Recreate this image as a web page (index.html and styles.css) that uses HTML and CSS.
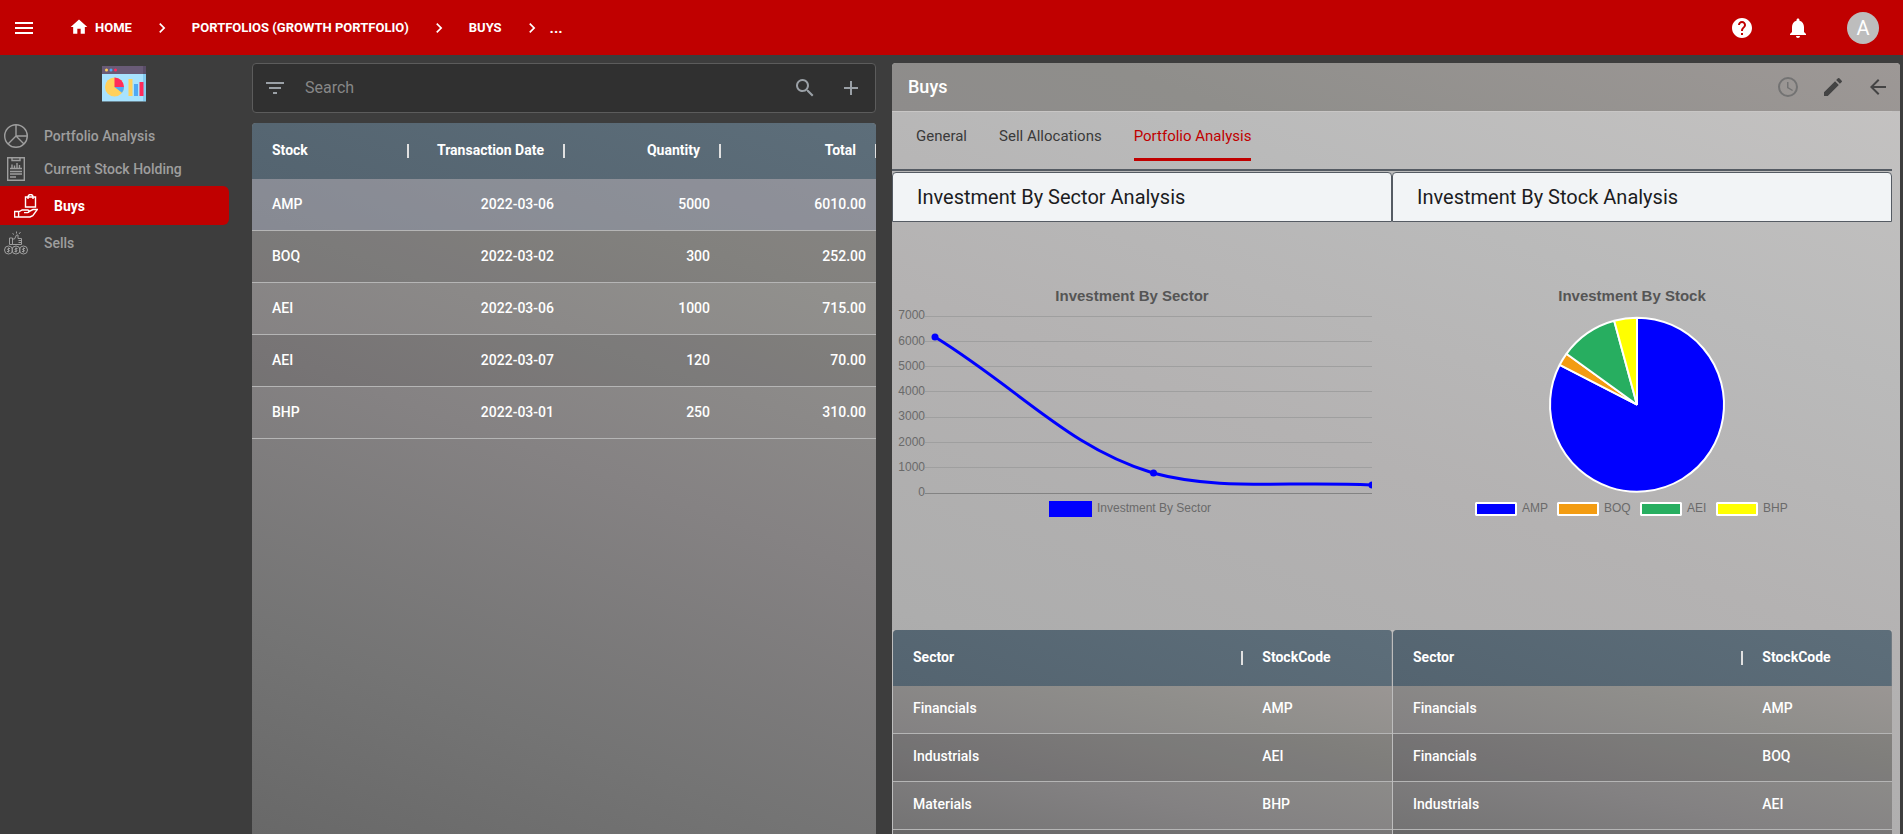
FILE: index.html
```html
<!DOCTYPE html>
<html lang="en">
<head>
<meta charset="utf-8">
<title>Buys - Portfolio Analysis</title>
<link rel="stylesheet" href="styles.css">
</head>
<body>
<header class="topbar">
  <button class="icon-btn" aria-label="Menu"><svg width="24" height="24" viewBox="0 0 24 24"><path d="M3 18h18v-2H3v2zm0-5h18v-2H3v2zm0-7v2h18V6H3z"/></svg></button>
  <nav class="crumbs" aria-label="Breadcrumb">
    <a href="#" class="crumb home"><svg width="20" height="20" viewBox="0 0 24 24"><path d="M10 20v-6h4v6h5v-8h3L12 3 2 12h3v8z"/></svg>HOME</a>
    <svg class="chev" width="20" height="20" viewBox="0 0 24 24"><path d="M10 6 8.600 7.400 13.200 12l-4.600 4.600L10 18l6-6z"/></svg>
    <a href="#" class="crumb">PORTFOLIOS (GROWTH PORTFOLIO)</a>
    <svg class="chev" width="20" height="20" viewBox="0 0 24 24"><path d="M10 6 8.600 7.400 13.200 12l-4.600 4.600L10 18l6-6z"/></svg>
    <a href="#" class="crumb">BUYS</a>
    <svg class="chev" width="20" height="20" viewBox="0 0 24 24"><path d="M10 6 8.600 7.400 13.200 12l-4.600 4.600L10 18l6-6z"/></svg>
    <a href="#" class="crumb more">...</a>
  </nav>
  <div class="top-actions">
    <button class="icon-btn" aria-label="Help"><svg width="24" height="24" viewBox="0 0 24 24"><path d="M12 2C6.480 2 2 6.480 2 12s4.480 10 10 10 10-4.480 10-10S17.520 2 12 2zm1 17h-2v-2h2v2zm2.070-7.750-.9.920C13.450 12.900 13 13.500 13 15h-2v-.5c0-1.100.45-2.100 1.170-2.830l1.240-1.260c.37-.36.59-.86.59-1.410 0-1.100-.9-2-2-2s-2 .9-2 2H8c0-2.210 1.790-4 4-4s4 1.790 4 4c0 .88-.36 1.680-.93 2.250z"/></svg></button>
    <button class="icon-btn" aria-label="Notifications"><svg width="24" height="24" viewBox="0 0 24 24"><path d="M12 22c1.100 0 2-.9 2-2h-4c0 1.100.9 2 2 2zm6-6v-5c0-3.070-1.630-5.640-4.500-6.320V4c0-.83-.67-1.500-1.500-1.500s-1.500.67-1.500 1.500v.68C7.640 5.360 6 7.920 6 11v5l-2 2v1h16v-1l-2-2z"/></svg></button>
    <button class="avatar" aria-label="Account">A</button>
  </div>
</header>

<div class="workspace">
  <aside class="sidebar">
    <svg class="logo" width="44" height="36" viewBox="0 0 44 36">
      <rect width="44" height="36" fill="#a8e3ff"/><rect x="41" width="3" height="36" fill="#84cdf2"/>
      <rect width="44" height="8" fill="#695b77"/><rect x="41" width="3" height="8" fill="#5a4d68"/>
      <rect y="35" width="44" height="1" fill="#6d8794"/>
      <circle cx="4.500" cy="4" r="1.500" fill="#ffd15c"/><circle cx="9" cy="4" r="1.500" fill="#4fa9f5"/><circle cx="13.500" cy="4" r="1.500" fill="#ff2b5b"/>
      <circle cx="12.500" cy="21" r="9.500" fill="#ffd15c"/>
      <path d="M12.500 21V11.500a9.500 9.500 0 0 1 9.500 9.500z" fill="#ff2b5b"/><path d="M12.500 21H22a9.500 9.500 0 0 1-2 5.800z" fill="#4fa9f5"/>
      <rect x="26.500" y="13" width="4" height="17" fill="#ffd15c"/><rect x="32" y="18" width="4" height="12" fill="#4fa9f5"/><rect x="37.500" y="16" width="4" height="14" fill="#ff2b5b"/>
    </svg>
    <nav class="side-nav" aria-label="Sections">
      <a href="#" class="side-link"><svg width="24" height="24" viewBox="0 0 24 24"><circle cx="12" cy="12" r="11.300"/><path d="M12 1v11h11M12 12l-8 8M12 12l8 8"/></svg>Portfolio Analysis</a>
      <a href="#" class="side-link"><svg width="24" height="24" viewBox="0 0 24 24"><path d="M3.700.7h16.600v22.600H3.700zM8 1v2.500h8V1M6 11.500h12M6 14.500h12M6 17h12M6 20h6M8 11V7.500M10.500 11V8.500M13 11V6M15.500 11V8"/></svg>Current Stock Holding</a>
      <a href="#" class="side-link active" aria-current="page"><svg width="24" height="24" viewBox="0 0 24 24"><path d="M11.500 3h10v10h-10zM14 5V3a2.500 2.500 0 0 1 5 0v2M.6 17.500h4v5.500h-4zM4.600 18l3.500-2h5.500c2 0 2 2.600 0 2.600H10M14 18l5-2.500h4.400l-4.600 6.200-2.800 1.300H4.600"/></svg>Buys</a>
      <a href="#" class="side-link"><svg class="fine" width="24" height="24" viewBox="0 0 24 24"><circle cx="4.500" cy="19" r="4"/><circle cx="12" cy="19" r="4"/><circle cx="19.500" cy="19" r="4"/><path d="M6 17.500H4q-1 .8 0 1.500h1q1 .8 0 1.500H3M4.500 16.500v5M13.500 17.500h-2q-1 .8 0 1.500h1q1 .8 0 1.500h-2M12 16.500v5M21 17.500h-2q-1 .8 0 1.500h1q1 .8 0 1.500h-2M19.500 16.500v5M5.500 7h3v6.500h-3zM8.500 8h2l2-4h1.500v3.500h3.500v6h-9M14.500 9.500h3M14.500 11.500h3M8.500 2.500l1.500 1M12.500.5v2M16.500 1 15 3"/></svg>Sells</a>
    </nav>
  </aside>

  <main class="list-pane">
    <form class="search">
      <button type="button" class="icon-btn" aria-label="Filter"><svg width="24" height="24" viewBox="0 0 24 24"><path d="M10 18h4v-2h-4v2zM3 6v2h18V6H3zm3 7h12v-2H6v2z"/></svg></button>
      <input class="search-input" type="text" placeholder="Search" aria-label="Search">
      <button type="button" class="icon-btn" aria-label="Search"><svg width="24" height="24" viewBox="0 0 24 24"><path d="M15.500 14h-.79l-.28-.27A6.500 6.500 0 1 0 13.730 14.430l.27.28v.79l5 4.990L20.490 19l-4.990-5zm-6 0a4.500 4.500 0 1 1 0-9 4.500 4.500 0 0 1 0 9z"/></svg></button>
      <button type="button" class="icon-btn" aria-label="Add"><svg width="24" height="24" viewBox="0 0 24 24"><path d="M19 13h-6v6h-2v-6H5v-2h6V5h2v6h6z"/></svg></button>
    </form>
    <div class="table-box">
      <table class="grid trades">
        <thead><tr><th>Stock</th><th class="num">Transaction Date</th><th class="num">Quantity</th><th class="num">Total</th></tr></thead>
        <tbody>
          <tr class="selected"><td>AMP</td><td class="num">2022-03-06</td><td class="num">5000</td><td class="num">6010.00</td></tr>
          <tr><td>BOQ</td><td class="num">2022-03-02</td><td class="num">300</td><td class="num">252.00</td></tr>
          <tr><td>AEI</td><td class="num">2022-03-06</td><td class="num">1000</td><td class="num">715.00</td></tr>
          <tr><td>AEI</td><td class="num">2022-03-07</td><td class="num">120</td><td class="num">70.00</td></tr>
          <tr><td>BHP</td><td class="num">2022-03-01</td><td class="num">250</td><td class="num">310.00</td></tr>
        </tbody>
      </table>
    </div>
  </main>

  <section class="detail">
    <div class="detail-head">
      <h1 class="detail-title">Buys</h1>
      <button class="icon-btn faded" aria-label="History"><svg width="24" height="24" viewBox="0 0 24 24"><path d="M12 2a10 10 0 1 0 0 20 10 10 0 0 0 0-20zm0 18a8 8 0 1 1 0-16 8 8 0 0 1 0 16zM12.500 7H11v6l5.200 3.100.8-1.200-4.500-2.700z"/></svg></button>
      <button class="icon-btn" aria-label="Edit"><svg width="24" height="24" viewBox="0 0 24 24"><path d="M3 17.250V21h3.750L17.810 9.940l-3.750-3.750L3 17.250zM20.710 7.040a1 1 0 0 0 0-1.410l-2.340-2.340a1 1 0 0 0-1.410 0l-1.830 1.830 3.750 3.750 1.830-1.830z"/></svg></button>
      <button class="icon-btn" aria-label="Back"><svg width="24" height="24" viewBox="0 0 24 24"><path d="M20 11H7.830l5.590-5.590L12 4l-8 8 8 8 1.410-1.410L7.830 13H20v-2z"/></svg></button>
    </div>
    <div class="detail-body">
      <div class="tabs" role="tablist">
        <button class="tab" role="tab">General</button>
        <button class="tab" role="tab">Sell Allocations</button>
        <button class="tab current" role="tab" aria-selected="true">Portfolio Analysis</button>
      </div>
      <div class="columns">
        <h2 class="card-title">Investment By Sector Analysis</h2>
        <h2 class="card-title">Investment By Stock Analysis</h2>

        <figure class="chart">
          <svg viewBox="0 0 500 250" role="img" aria-label="Investment By Sector">
            <text class="chart-title" x="240" y="21">Investment By Sector</text>
            <path class="gridline" d="M33 36.500H480M33 61.500H480M33 86.500H480M33 111.500H480M33 137.500H480M33 162.500H480M33 187.500H480"/>
            <path class="axis" d="M33 213.500H480"/>
            <g class="ticks"><text x="33" y="39">7000</text><text x="33" y="65">6000</text><text x="33" y="90">5000</text><text x="33" y="115">4000</text><text x="33" y="140">3000</text><text x="33" y="166">2000</text><text x="33" y="191">1000</text><text x="33" y="216">0</text></g>
            <clipPath id="plot"><rect x="33" y="36" width="447" height="178"/></clipPath>
            <g clip-path="url(#plot)"><path class="series" d="M43 57C130 111 176 167 261 193C328 211 392 201 480 205"/><g fill="#00f"><circle cx="43" cy="57" r="3.500"/><circle cx="261.500" cy="193" r="3.500"/><circle cx="480" cy="205" r="3.500"/></g></g>
            <rect x="157" y="221" width="43" height="16" fill="#00f"/>
            <text class="legend" x="205" y="232">Investment By Sector</text>
          </svg>
        </figure>
        <figure class="chart">
          <svg viewBox="0 0 500 250" role="img" aria-label="Investment By Stock">
            <text class="chart-title" x="240" y="21">Investment By Stock</text>
            <g stroke="#fff" stroke-width="2" stroke-linejoin="bevel">
              <path fill="#00f" d="M245 124.700V37.700A87 87 0 1 1 167.700 84.800z"/>
              <path fill="#f39c12" d="M245 124.700 167.700 84.800A87 87 0 0 1 174.400 73.800z"/>
              <path fill="#27ae60" d="M245 124.700 174.400 73.800A87 87 0 0 1 222.200 40.700z"/>
              <path fill="#ff0" d="M245 124.700 222.200 40.700A87 87 0 0 1 245 37.700z"/>
              <rect x="84" y="223" width="40" height="12" fill="#00f"/><rect x="166" y="223" width="40" height="12" fill="#f39c12"/><rect x="249" y="223" width="40" height="12" fill="#27ae60"/><rect x="325" y="223" width="40" height="12" fill="#ff0"/>
            </g>
            <text class="legend" x="130" y="232">AMP</text><text class="legend" x="212" y="232">BOQ</text><text class="legend" x="295" y="232">AEI</text><text class="legend" x="371" y="232">BHP</text>
          </svg>
        </figure>

        <div class="mini-box"><table class="grid mini">
          <thead><tr><th class="wide">Sector</th><th>StockCode</th></tr></thead>
          <tbody><tr><td>Financials</td><td>AMP</td></tr><tr><td>Industrials</td><td>AEI</td></tr><tr><td>Materials</td><td>BHP</td></tr><tr><td></td><td></td></tr></tbody>
        </table></div>
        <div class="mini-box"><table class="grid mini">
          <thead><tr><th class="wide">Sector</th><th>StockCode</th></tr></thead>
          <tbody><tr><td>Financials</td><td>AMP</td></tr><tr><td>Financials</td><td>BOQ</td></tr><tr><td>Industrials</td><td>AEI</td></tr><tr><td></td><td></td></tr></tbody>
        </table></div>
      </div>
    </div>
  </section>
</div>
</body>
</html>
```

FILE: styles.css
```css
* { box-sizing: border-box; }

body {
  margin: 0;
  height: 100vh;
  display: flex;
  flex-direction: column;
  overflow: hidden;
  background: #3d3d3d;
  color: #fff;
  font: 500 14px/20px Roboto, sans-serif;
}

button { font: inherit; color: inherit; background: none; border: 0; padding: 0; cursor: pointer; }
a { color: inherit; text-decoration: none; }
svg { display: block; flex: none; }
.icon-btn { display: flex; flex: none; }
.icon-btn svg, .crumbs svg { fill: currentColor; }

/* Top bar */
.topbar {
  flex: none;
  height: 55px;
  display: flex;
  align-items: center;
  padding: 0 24px 0 12px;
  background: #c00000;
}
.crumbs { display: flex; align-items: center; margin-left: 33px; font-size: 13px; font-weight: 700; }
.crumb { display: flex; align-items: center; margin-right: 20px; }
.home { gap: 6px; }
.home svg { margin-top: -2px; }
.chev { margin-right: 20px; }
.more { margin-left: -12px; font-size: 15px; }
.top-actions { display: flex; align-items: center; margin-left: auto; }
.top-actions .icon-btn { margin-right: 32px; }
.avatar {
  width: 32px;
  height: 32px;
  margin-left: 5px;
  border-radius: 50%;
  background: #bdbdbd;
  font-size: 20px;
  font-weight: 400;
}

.workspace {
  flex: 1;
  min-height: 0;
  display: grid;
  grid-template-columns: 236px minmax(0, 624fr) minmax(0, 1008fr);
  column-gap: 16px;
  padding-right: 3px;
}

/* Sidebar */
.sidebar { padding-top: 11px; }
.logo { margin: 0 auto; position: relative; left: 6px; }
.side-nav { margin-top: 17px; }
.side-link {
  display: flex;
  align-items: center;
  gap: 16px;
  height: 33px;
  padding-left: 4px;
  color: #9e9e9e;
}
.side-link svg { fill: none; stroke: currentColor; stroke-width: 1.400; }
.side-link svg.fine { stroke-width: 1; }
.side-link.active {
  height: 39px;
  margin: 1px 7px 1px 0;
  padding-left: 14px;
  border-radius: 0 6px 6px 0;
  background: #c00000;
  color: #fff;
  font-weight: 700;
}

/* Trade list */
.list-pane { display: flex; flex-direction: column; gap: 10px; padding-top: 8px; min-height: 0; }
.search {
  flex: none;
  height: 50px;
  display: flex;
  align-items: center;
  padding: 0 12px 0 10px;
  border: 1px solid #5c5c5c;
  border-radius: 4px;
  background: #303030;
  color: #9aa0a6;
}
.search-input {
  flex: 1;
  min-width: 0;
  margin-left: 18px;
  padding: 0;
  border: 0;
  outline: 0;
  background: none;
  color: #fff;
  font: 400 16px/24px Roboto, sans-serif;
}
.search-input::placeholder { color: #878787; opacity: 1; }
.search .icon-btn + .icon-btn { margin-left: 22px; }

.table-box {
  flex: 1;
  overflow: hidden;
  border-radius: 4px 4px 0 0;
  background: linear-gradient(200deg, #9b9694 0%, #91908d 20%, #858283 48%, #747474 78%, #686868 100%);
}

.grid { width: 100%; table-layout: fixed; border-collapse: separate; border-spacing: 0; }
.grid thead tr { background: linear-gradient(200deg, #5d6e7a, #546470); }
.grid th { position: relative; height: 56px; padding: 0 20px 2px; font-weight: 700; text-align: left; white-space: nowrap; }
.grid th:not(:last-child)::after, .trades th::after {
  content: "";
  position: absolute;
  top: 21px;
  right: -1px;
  z-index: 1;
  width: 2px;
  height: 14px;
  background: #e0e0e0;
}
.grid td { height: 52px; padding: 0 20px 2px; border-bottom: 1px solid #b5b5b5; }
.grid tbody tr:nth-child(even) { background: rgba(0, 0, 0, 0.1); }
.grid .num { text-align: right; }
.grid td.num { padding-right: 10px; }
.grid .selected { background: rgba(130, 140, 165, 0.4); }

/* Detail panel */
.detail {
  display: flex;
  flex-direction: column;
  min-height: 0;
  margin-top: 8px;
  overflow: hidden;
  border-radius: 4px 4px 0 0;
  background: linear-gradient(200deg, #c5c3c2 0%, #bababa 28%, #b4b2b2 52%, #adadad 80%, #a6a6a6 100%);
}
.detail-head {
  flex: none;
  height: 48px;
  display: flex;
  align-items: center;
  gap: 21px;
  padding: 0 10px 0 16px;
  background: linear-gradient(200deg, #9d9896, #8f8e8b 70%, #8e8c8b);
  color: #444;
}
.detail-title { flex: 1; margin: 0; color: #fff; font-size: 18px; font-weight: 500; }
.faded { color: #737373; }
.detail-body { flex: 1; min-height: 0; overflow: hidden; padding-right: 8px; }
.tabs {
  display: flex;
  gap: 32px;
  height: 60px;
  padding-left: 24px;
  border-top: 1px solid #c8c6c5;
  border-bottom: 2px solid #555b63;
}
.tab {
  height: 49px;
  padding-top: 2px;
  border-bottom: 3px solid transparent;
  border-radius: 2px 2px 0 0;
  color: #3a3a3a;
  font-size: 15px;
  font-weight: 400;
}
.tab.current { color: #c00000; border-bottom-color: #c00000; }
.columns { display: grid; grid-template-columns: minmax(0, 1fr) minmax(0, 1fr); margin-top: 1px; }
.card-title {
  height: 50px;
  margin: 0;
  padding: 0 24px;
  border: 1px solid #555b63;
  border-radius: 4px 4px 0 0;
  background: #f2f4f6;
  color: #1c1c1e;
  font-size: 20px;
  font-weight: 400;
  line-height: 48px;
}
.chart { margin: 0; padding: 58px 0 100px; }
.chart svg { width: 100%; height: auto; }
.chart text { font-family: "Liberation Sans", Arial, sans-serif; font-size: 12px; fill: #6a6a6a; }
.chart .chart-title { font-size: 15px; font-weight: 700; text-anchor: middle; fill: #555; }
.ticks { text-anchor: end; }
.gridline { stroke: #9f9f9f; }
.axis { stroke: #838383; }
.series { fill: none; stroke: #00f; stroke-width: 3; }

.mini-box { padding-left: 1px; background: #bdbdbd; }
.mini { overflow: hidden; border-radius: 4px 4px 0 0; background: linear-gradient(194deg, #9d9896 10%, #8f8e8b 34%, #838182 62%, #6c6c6c 100%); }
.mini .wide { width: 70%; }
.mini td { height: 48px; padding-bottom: 3px; }
```
